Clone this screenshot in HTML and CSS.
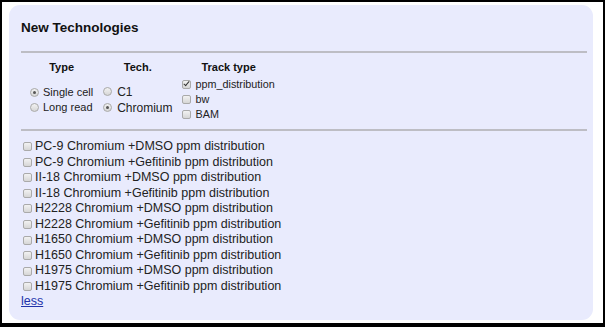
FILE: index.html
```html
<!DOCTYPE html>
<html lang="en">
<head>
    <meta charset="UTF-8">
    <title>New Technologies</title>
    <link rel="stylesheet" href="styles.css">
</head>
<body>

<div class="panel">
    <h2 class="panel-title">New Technologies</h2>
    <hr class="rule rule-top">

    <!-- Filters -->
    <table class="filters">
        <thead>
            <tr>
                <th>Type</th>
                <th>Tech.</th>
                <th>Track type</th>
            </tr>
        </thead>
        <tbody>
            <tr>
                <td class="type-cell">
                    <label class="opt"><input type="radio" name="type" checked> Single cell</label>
                    <label class="opt"><input type="radio" name="type"> Long read</label>
                </td>
                <td class="tech-cell">
                    <label class="opt"><input type="radio" name="tech"> C1</label>
                    <label class="opt"><input type="radio" name="tech" checked> Chromium</label>
                </td>
                <td class="track-cell">
                    <label class="opt"><input type="checkbox" checked> ppm_distribution</label>
                    <label class="opt"><input type="checkbox"> bw</label>
                    <label class="opt"><input type="checkbox"> BAM</label>
                </td>
            </tr>
        </tbody>
    </table>

    <hr class="rule">

    <!-- Tracks -->
    <div class="track-list">
        <label class="track"><input type="checkbox"> PC-9 Chromium +DMSO ppm distribution</label>
        <label class="track"><input type="checkbox"> PC-9 Chromium +Gefitinib ppm distribution</label>
        <label class="track"><input type="checkbox"> II-18 Chromium +DMSO ppm distribution</label>
        <label class="track"><input type="checkbox"> II-18 Chromium +Gefitinib ppm distribution</label>
        <label class="track"><input type="checkbox"> H2228 Chromium +DMSO ppm distribution</label>
        <label class="track"><input type="checkbox"> H2228 Chromium +Gefitinib ppm distribution</label>
        <label class="track"><input type="checkbox"> H1650 Chromium +DMSO ppm distribution</label>
        <label class="track"><input type="checkbox"> H1650 Chromium +Gefitinib ppm distribution</label>
        <label class="track"><input type="checkbox"> H1975 Chromium +DMSO ppm distribution</label>
        <label class="track"><input type="checkbox"> H1975 Chromium +Gefitinib ppm distribution</label>
    </div>
    <a href="#" class="less-link">less</a>
</div>

</body>
</html>
```

FILE: styles.css
```css
/* General Reset */
* {
    box-sizing: border-box;
    margin: 0;
    padding: 0;
}

html {
    background-color: #fff;
}

body {
    font-family: "Liberation Sans", Arial, sans-serif;
    color: #222;
    height: 327px;
    border: 2px solid #000;
    border-bottom-width: 4px;
    padding: 3px 10px 3px 7px;
}

/* Panel */
.panel {
    height: 100%;
    background-color: #e9ebfd;
    border-radius: 11px;
    padding: 15px 6px 12px 12px;
}

.panel-title {
    font-size: 13.5px;
    font-weight: bold;
    line-height: 16px;
    color: #111;
}

.rule {
    border: 0;
    border-top: 2px solid #bdbdc4;
}

.rule-top {
    margin-top: 15px;
}

/* Filters table */
.filters {
    border-collapse: collapse;
    margin: 8px 0 7px 4px;
}

.filters th {
    font-size: 11px;
    font-weight: bold;
    line-height: 13px;
    padding: 0 5px 3px;
    text-align: center;
    color: #111;
}

.filters td {
    vertical-align: middle;
    padding: 0 5px;
}

.opt {
    display: flex;
    align-items: center;
    gap: 4px;
    white-space: nowrap;
}

.type-cell .opt {
    font-size: 11px;
    line-height: 15px;
}

.tech-cell .opt {
    font-size: 12px;
    line-height: 16px;
    gap: 5px;
}

.track-cell .opt {
    font-size: 10.8px;
    line-height: 15px;
}

/* Inputs */
input[type="radio"],
input[type="checkbox"] {
    appearance: none;
    -webkit-appearance: none;
    flex: none;
    width: 9px;
    height: 9px;
    border: 1px solid #aaa;
    background: linear-gradient(#f2f2f2, #d6d6d6);
    position: relative;
}

input[type="radio"] {
    border-radius: 50%;
}

input[type="radio"]:checked::after {
    content: "";
    position: absolute;
    left: 2px;
    top: 2px;
    width: 3px;
    height: 3px;
    border-radius: 50%;
    background-color: #555;
}

input[type="checkbox"] {
    border-radius: 2px;
}

input[type="checkbox"]:checked::after {
    content: "";
    position: absolute;
    left: 2px;
    top: -1px;
    width: 2px;
    height: 5px;
    border: solid #333;
    border-width: 0 1.5px 1.5px 0;
    transform: rotate(40deg);
}

/* Track list */
.track-list {
    margin-top: 8px;
}

.track {
    display: flex;
    align-items: center;
    gap: 3px;
    padding-left: 2px;
    font-size: 12.5px;
    line-height: 15.55px;
    white-space: nowrap;
}

.less-link {
    display: block;
    font-size: 12.5px;
    line-height: 15.5px;
    color: #2233aa;
}
```
